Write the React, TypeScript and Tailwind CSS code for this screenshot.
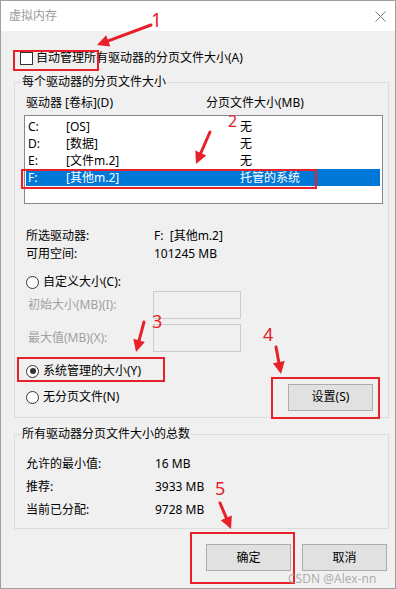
import type React from "react";

const FONT = {
  fontFamily: '"Noto Sans", "Noto Sans CJK SC", sans-serif',
};

const RED = "#e8202a";

function Arrow({ x1, y1, x2, y2 }: { x1: number; y1: number; x2: number; y2: number }) {
  const dx = x2 - x1;
  const dy = y2 - y1;
  const len = Math.hypot(dx, dy);
  const ux = dx / len;
  const uy = dy / len;
  const bx = x2 - ux * 12;
  const by = y2 - uy * 12;
  const nx = -uy * 6;
  const ny = ux * 6;
  return (
    <g>
      <line stroke={RED} strokeLinecap="round" strokeWidth={3} x1={x1} x2={bx} y1={y1} y2={by} />
      <polygon fill={RED} points={`${x2},${y2} ${bx + nx},${by + ny} ${bx - nx},${by - ny}`} />
    </g>
  );
}

function Radio({ checked, label }: { checked?: boolean; label: string }) {
  return (
    <div className="flex h-[18px] items-center">
      <span className="flex h-[13px] w-[13px] items-center justify-center rounded-full border border-[#333] bg-white">
        {checked && <span className="h-[6px] w-[6px] rounded-full bg-[#333]" />}
      </span>
      <span className="ml-[4px]">{label}</span>
    </div>
  );
}

function Annotations() {
  return (
    <>
      <svg className="pointer-events-none absolute inset-0" height={589} width={396}>
        <Arrow x1={150} x2={96} y1={24} y2={44} />
        <Arrow x1={209} x2={195} y1={131} y2={163} />
        <Arrow x1={143} x2={135} y1={321} y2={351} />
        <Arrow x1={275} x2={280} y1={346} y2={373} />
        <Arrow x1={219} x2={230} y1={502} y2={528} />
      </svg>
      {/* red frames */}
      <div className="absolute left-[12px] top-[49px] h-[21px] w-[86px] border-2 border-[#e8202a]" />
      <div className="absolute left-[20px] top-[168px] h-[20px] w-[296px] border-2 border-[#e8202a]" />
      <div className="absolute left-[16px] top-[356px] h-[25px] w-[148px] border-2 border-[#e8202a]" />
      <div className="absolute left-[270px] top-[376px] h-[42px] w-[109px] border-2 border-[#e8202a]" />
      <div className="absolute left-[189px] top-[531px] h-[52px] w-[105px] border-2 border-[#e8202a]" />
      {/* numbers */}
      <span className="absolute left-[150px] top-[8px] text-[19px] leading-[22px] text-[#e8202a]">1</span>
      <span className="absolute left-[227px] top-[111px] text-[16px] leading-[18px] text-[#e8202a]">2</span>
      <span className="absolute left-[151px] top-[310px] text-[18px] leading-[20px] text-[#e8202a]">3</span>
      <span className="absolute left-[262px] top-[323px] text-[18px] leading-[20px] text-[#e8202a]">4</span>
      <span className="absolute left-[214px] top-[477px] text-[18px] leading-[20px] text-[#e8202a]">5</span>
      {/* watermark */}
      <span className="absolute left-[287px] top-[570px] text-[12px] leading-[16px] text-[#9a9a9a]/80">
        CSDN @Alex-nn
      </span>
    </>
  );
}

export default function App() {
  const drives = [
    { d: "C:", label: "[OS]", size: "无" },
    { d: "D:", label: "[数据]", size: "无" },
    { d: "E:", label: "[文件m.2]", size: "无" },
    { d: "F:", label: "[其他m.2]", size: "托管的系统", selected: true },
  ];

  return (
    <div
      className="relative h-[589px] w-[396px] overflow-hidden border border-[#a0a0a0] bg-[#f0f0f0] text-[12px] leading-[16px] text-black"
      style={FONT as React.CSSProperties}
    >
      {/* Title bar */}
      <div className="flex h-[30px] items-center justify-between bg-white pl-[8px] pr-[9px]">
        <span className="text-[12px] text-[#999]">虚拟内存</span>
        <svg height={11} viewBox="0 0 11 11" width={11}>
          <path d="M0.5 0.5 L10.5 10.5 M10.5 0.5 L0.5 10.5" stroke="#7a7a7a" strokeWidth={1} />
        </svg>
      </div>

      {/* Auto manage */}
      <div className="mt-[18px] flex h-[18px] items-center pl-[19px]">
        <span className="h-[13px] w-[13px] border border-[#333] bg-white" />
        <span className="ml-[3px]">自动管理所有驱动器的分页文件大小(A)</span>
      </div>

      {/* Per drive group */}
      <fieldset className="ml-[13px] mt-[7px] w-[375px] border border-[#dcdcdc] pb-[6px]">
        <legend className="ml-[6px] px-[1px] leading-[16px]">每个驱动器的分页文件大小</legend>
        <div className="mt-[5px] flex h-[16px] items-center pl-[11px]">
          <span className="w-[180px]">驱动器 [卷标](D)</span>
          <span>分页文件大小(MB)</span>
        </div>
        <div className="ml-[9px] mt-[4px] h-[89px] w-[359px] border border-[#828790] bg-white pt-[2px]">
          {drives.map((r) => (
            <div
              className={`ml-[1px] mr-[2px] flex h-[17px] items-center pl-[2px] ${
                r.selected ? "bg-[#0078d7] text-white" : ""
              }`}
              key={r.d}
            >
              <span className="w-[38px]">{r.d}</span>
              <span className="w-[174px]">{r.label}</span>
              <span>{r.size}</span>
            </div>
          ))}
        </div>

        <div className="mt-[23px] flex h-[18px] items-center pl-[11px]">
          <span className="w-[128px]">所选驱动器:</span>
          <span>F:&nbsp;&nbsp;[其他m.2]</span>
        </div>
        <div className="flex h-[18px] items-center pl-[11px]">
          <span className="w-[128px]">可用空间:</span>
          <span>101245 MB</span>
        </div>

        <div className="mt-[10px] pl-[11px]">
          <Radio label="自定义大小(C):" />
        </div>
        <div className="flex h-[28px] items-center pl-[13px] text-[#a0a0a0]">
          <span className="w-[125px]">初始大小(MB)(I):</span>
          <span className="h-[28px] w-[88px] border border-[#cccccc] bg-[#f0f0f0]" />
        </div>
        <div className="mt-[5px] flex h-[28px] items-center pl-[13px] text-[#a0a0a0]">
          <span className="w-[125px]">最大值(MB)(X):</span>
          <span className="h-[28px] w-[88px] border border-[#cccccc] bg-[#f0f0f0]" />
        </div>

        <div className="mt-[10px] pl-[11px]">
          <Radio checked label="系统管理的大小(Y)" />
        </div>
        <div className="mt-[3px] flex h-[28px] items-center justify-between pl-[11px] pr-[15px]">
          <Radio label="无分页文件(N)" />
          <button
            className="h-[27px] w-[85px] border border-[#adadad] bg-[#e1e1e1] text-[12px]"
            type="button"
          >
            设置(S)
          </button>
        </div>
      </fieldset>

      {/* Totals group */}
      <fieldset className="ml-[13px] mt-[8px] w-[375px] border border-[#dcdcdc] pb-[7px]">
        <legend className="ml-[6px] px-[1px] leading-[16px]">所有驱动器分页文件大小的总数</legend>
        <div className="mt-[10px] pl-[11px]">
          {[
            ["允许的最小值:", "16 MB"],
            ["推荐:", "3933 MB"],
            ["当前已分配:", "9728 MB"],
          ].map(([k, v]) => (
            <div className="flex h-[23px] items-center" key={k}>
              <span className="w-[129px]">{k}</span>
              <span>{v}</span>
            </div>
          ))}
        </div>
      </fieldset>

      {/* Dialog buttons */}
      <div className="mt-[15px] flex justify-end gap-[11px] pr-[8px]">
        <button className="h-[27px] w-[85px] border border-[#adadad] bg-[#e1e1e1]" type="button">
          确定
        </button>
        <button className="h-[27px] w-[85px] border border-[#adadad] bg-[#e1e1e1]" type="button">
          取消
        </button>
      </div>

      <Annotations />
    </div>
  );
}
